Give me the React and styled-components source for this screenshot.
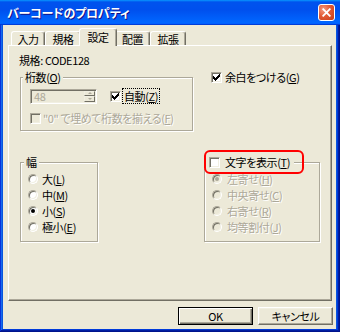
import React from "react";
import styled, { createGlobalStyle } from "styled-components";

const FONT = `"Noto Sans CJK JP", "Noto Sans CJK SC", "Noto Sans", sans-serif`;

const GlobalStyle = createGlobalStyle`
  html, body { margin: 0; padding: 0; }
  body { background: #ECE9D8; font-family: ${FONT}; }
  * { box-sizing: border-box; }
`;

const Window = styled.div`
  width: 340px;
  height: 332px;
  display: flex;
  flex-direction: column;
  background: #0855dd;
  box-shadow: inset -1px -1px #00138c, inset 1px 1px #0831d9,
    inset -2px -2px #001ea0, inset 2px 2px #166aee, inset -3px -3px #003bda,
    inset 3px 3px #0855dd;
  font-family: ${FONT};
  font-size: 11px;
  font-feature-settings: "palt";
  letter-spacing: -0.4px;
  color: #000;
  overflow: hidden;
`;

const TitleBar = styled.div`
  height: 25px;
  flex: none;
  display: flex;
  align-items: center;
  justify-content: space-between;
  padding: 0 5px 0 7px;
  background: linear-gradient(
    180deg,
    #0997ff 0%,
    #0053ee 8%,
    #0050ee 40%,
    #0066ff 88%,
    #0066ff 93%,
    #005bff 95%,
    #003dd7 96%,
    #003dd7 100%
  );
`;

const Title = styled.span`
  color: #fff;
  font-weight: 700;
  font-size: 12px;
  line-height: 14px;
  letter-spacing: -0.2px;
  text-shadow: 1px 1px #0f1089;
`;

const CloseButton = styled.div`
  width: 17px;
  height: 17px;
  border: 1px solid #fff;
  border-radius: 3px;
  background: radial-gradient(circle at 30% 30%, #f39a80 0%, #e25a34 45%, #c83c18 100%);
  display: flex;
  align-items: center;
  justify-content: center;
`;

const Body = styled.div`
  flex: 1;
  margin: 0 4px 3px 3px;
  background: #ece9d8;
  padding: 3px 4px 0 5px;
  display: flex;
  flex-direction: column;
`;

const TabStrip = styled.div`
  display: flex;
  align-items: flex-end;
  height: 18px;
  padding-left: 3px;
  margin-bottom: -1px;
`;

const Tab = styled.div`
  width: ${(p) => p.$w}px;
  height: ${(p) => (p.$active ? 18 : 14)}px;
  margin: 0 ${(p) => (p.$active ? -2 : 0)}px ${(p) => (p.$active ? 0 : 1)}px;
  ${(p) => (p.$active ? "position: relative; z-index: 1;" : "")}
  display: flex;
  align-items: center;
  justify-content: center;
  padding-bottom: ${(p) => (p.$active ? 2 : 0)}px;
  background: #ece9d8;
  border-top: 1px solid #fff;
  border-left: 1px solid #fff;
  border-right: 1px solid #716f64;
  border-radius: 3px 3px 0 0;
  box-shadow: inset -1px 0 #aca899;
  line-height: 14px;
  white-space: nowrap;
`;

const Panel = styled.div`
  height: 256px;
  flex: none;
  border: 1px solid;
  border-color: #fff #716f64 #716f64 #fff;
  box-shadow: inset -1px -1px #aca899;
  padding: 7px 0 0 11px;
`;

const SpecLine = styled.div`
  line-height: 14px;
  margin-left: -1px;
`;

const Layout = styled.div`
  display: grid;
  grid-template-columns: 173px 116px;
  column-gap: 11px;
  row-gap: 24px;
  margin-top: 3px;
  align-items: start;
`;

const Group = styled.fieldset`
  margin: 0;
  padding: 0;
  min-width: 0;
  width: ${(p) => p.$w}px;
  border: 1px solid #aca899;
  box-shadow: 1px 1px #fff, inset 1px 1px #fff;
`;

const Legend = styled.legend`
  display: flex;
  align-items: center;
  height: 14px;
  line-height: 14px;
  padding: 0 ${(p) => p.$pad ?? 2}px;
  margin-left: ${(p) => p.$offset}px;
  background: #ece9d8;
  white-space: nowrap;
`;

const GroupContent = styled.div`
  padding: ${(p) => p.$pad};
  display: flex;
  flex-direction: column;
  gap: ${(p) => p.$gap ?? 0}px;
`;

const Row = styled.div`
  display: flex;
  align-items: center;
  height: ${(p) => p.$h}px;
`;

const SpinBox = styled.div`
  width: 67px;
  height: 15px;
  display: flex;
  border: 1px solid;
  border-color: #aca899 #fff #fff #aca899;
  box-shadow: inset 1px 1px #716f64, inset -1px -1px #f1efe2;
  background: #ece9d8;
  padding: 1px;
`;

const SpinValue = styled.span`
  flex: 1;
  color: #aca899;
  line-height: 11px;
  padding-left: 2px;
`;

const SpinButtons = styled.div`
  width: 11px;
  display: flex;
  flex-direction: column;
`;

const SpinButton = styled.div`
  flex: 1;
  border: 1px solid;
  border-color: #f1efe2 #716f64 #716f64 #f1efe2;
  background: #ece9d8;
  display: flex;
  align-items: center;
  justify-content: center;
  &::after {
    content: "";
    border-left: 2px solid transparent;
    border-right: 2px solid transparent;
    ${(p) => (p.$up ? "border-bottom" : "border-top")}: 2px solid #aca899;
  }
`;

const CheckRow = styled.div`
  display: flex;
  align-items: center;
  gap: ${(p) => p.$gap ?? 2}px;
  height: 14px;
  line-height: 14px;
  margin-left: ${(p) => p.$ml ?? 0}px;
  white-space: nowrap;
`;

const CheckBox = styled.span`
  width: 11px;
  height: 11px;
  flex: none;
  border: 1px solid;
  border-color: #aca899 #fff #fff #aca899;
  box-shadow: inset 1px 1px #716f64, inset -1px -1px #f1efe2;
  background: ${(p) => (p.$disabled ? "#ece9d8" : "#fff")};
  display: flex;
  align-items: center;
  justify-content: center;
`;

const Label = styled.span`
  color: ${(p) => (p.$disabled ? "#aca899" : "#000")};
  text-shadow: ${(p) => (p.$disabled ? "1px 1px #fff" : "none")};
  line-height: 14px;
`;

const FocusLabel = styled.span`
  border: 1px dotted #000;
  padding: 0 1px;
  line-height: 14px;
  margin-left: 1px;
`;

const RadioRow = styled.div`
  display: flex;
  align-items: center;
  gap: ${(p) => p.$gap}px;
  height: 16px;
  white-space: nowrap;
`;

const RadioCircle = styled.span`
  width: 10px;
  height: 10px;
  flex: none;
  border-radius: 50%;
  border: 1px solid;
  border-color: #aca899 #fff #fff #aca899;
  box-shadow: inset 1px 1px #716f64, inset -1px -1px #f1efe2;
  background: ${(p) => (p.$disabled ? "#ece9d8" : "#fff")};
  display: flex;
  align-items: center;
  justify-content: center;
  &::after {
    content: "";
    width: 4px;
    height: 4px;
    border-radius: 50%;
    background: ${(p) => (p.$disabled ? "#aca899" : "#000")};
    display: ${(p) => (p.$checked ? "block" : "none")};
  }
`;

const Highlight = styled.span`
  display: flex;
  align-items: center;
  gap: 5px;
  height: 24px;
  margin: -5px -10px -5px 0;
  padding: 0 12px 0 3px;
  border: 2px solid #ff0000;
  border-radius: 6px;
`;

const ButtonRow = styled.div`
  display: flex;
  justify-content: flex-end;
  gap: 5px;
  margin-top: 6px;
  margin-right: -1px;
`;

const Button = styled.div`
  width: 75px;
  height: 18px;
  display: flex;
  align-items: center;
  justify-content: center;
  background: #ece9d8;
  line-height: 14px;
  border: 1px solid;
  border-color: ${(p) => (p.$default ? "#000" : "#fff #716f64 #716f64 #fff")};
  box-shadow: ${(p) =>
    p.$default
      ? "inset 1px 1px #fff, inset -1px -1px #716f64, inset -2px -2px #aca899"
      : "inset -1px -1px #aca899, inset 1px 1px #f1efe2"};
`;

const Check = ({ checked, disabled }) => (
  <CheckBox $disabled={disabled}>
    {checked && (
      <svg width="7" height="7" viewBox="0 0 7 7" shapeRendering="crispEdges">
        {[2, 3, 4, 3, 2, 1, 0].map((y, x) => (
          <rect key={x} x={x} y={y} width="1" height="3" fill={disabled ? "#aca899" : "#000"} />
        ))}
      </svg>
    )}
  </CheckBox>
);

const Radio = ({ checked, disabled, gap, children }) => (
  <RadioRow $gap={gap}>
    <RadioCircle $checked={checked} $disabled={disabled} />
    <Label $disabled={disabled}>{children}</Label>
  </RadioRow>
);

const tabs = [
  { label: "入力", w: 34 },
  { label: "規格", w: 36 },
  { label: "設定", w: 38, active: true },
  { label: "配置", w: 35 },
  { label: "拡張", w: 36 },
];

export default function App() {
  return (
    <>
      <GlobalStyle />
      <Window>
        <TitleBar>
          <Title>バーコードのプロパティ</Title>
          <CloseButton>
            <svg width="9" height="9" viewBox="0 0 9 9">
              <path d="M1.2 1.2 L7.8 7.8 M7.8 1.2 L1.2 7.8" stroke="#fff" strokeWidth="1.8" strokeLinecap="square" />
            </svg>
          </CloseButton>
        </TitleBar>
        <Body>
          <TabStrip>
            {tabs.map((t) => (
              <Tab key={t.label} $w={t.w} $active={t.active}>
                {t.label}
              </Tab>
            ))}
          </TabStrip>
          <Panel>
            <SpecLine>規格: CODE128</SpecLine>
            <Layout>
              <Group $w={173}>
                <Legend $offset={2}>
                  桁数(<u>O</u>)
                </Legend>
                <GroupContent $pad="4px 0 5px 9px" $gap={7}>
                  <Row $h={16}>
                    <SpinBox>
                      <SpinValue>48</SpinValue>
                      <SpinButtons>
                        <SpinButton $up />
                        <SpinButton />
                      </SpinButtons>
                    </SpinBox>
                    <CheckRow $ml={13} $gap={0}>
                      <Check checked />
                      <FocusLabel>
                        自動(<u>Z</u>)
                      </FocusLabel>
                    </CheckRow>
                  </Row>
                  <Row $h={14}>
                    <CheckRow $gap={2}>
                      <Check disabled />
                      <Label $disabled>
                        "0" で埋めて桁数を揃える(<u>F</u>)
                      </Label>
                    </CheckRow>
                  </Row>
                </GroupContent>
              </Group>
              <CheckRow $ml={7} $gap={3}>
                <Check checked />
                <Label>
                  余白をつける(<u>G</u>)
                </Label>
              </CheckRow>
              <Group $w={78}>
                <Legend $offset={3}>幅</Legend>
                <GroupContent $pad="2px 0 6px 7px">
                  <Radio gap={4}>
                    大(<u>L</u>)
                  </Radio>
                  <Radio gap={4}>
                    中(<u>M</u>)
                  </Radio>
                  <Radio gap={4} checked>
                    小(<u>S</u>)
                  </Radio>
                  <Radio gap={4}>
                    極小(<u>E</u>)
                  </Radio>
                </GroupContent>
              </Group>
              <Group $w={116}>
                <Legend $offset={-1} $pad={0}>
                  <Highlight>
                    <Check />
                    <Label>
                      文字を表示(<u>T</u>)
                    </Label>
                  </Highlight>
                </Legend>
                <GroupContent $pad="2px 0 6px 7px">
                  <Radio gap={5} checked disabled>
                    左寄せ(<u>H</u>)
                  </Radio>
                  <Radio gap={5} disabled>
                    中央寄せ(<u>C</u>)
                  </Radio>
                  <Radio gap={5} disabled>
                    右寄せ(<u>R</u>)
                  </Radio>
                  <Radio gap={5} disabled>
                    均等割付(<u>J</u>)
                  </Radio>
                </GroupContent>
              </Group>
            </Layout>
          </Panel>
          <ButtonRow>
            <Button $default>OK</Button>
            <Button>キャンセル</Button>
          </ButtonRow>
        </Body>
      </Window>
    </>
  );
}
